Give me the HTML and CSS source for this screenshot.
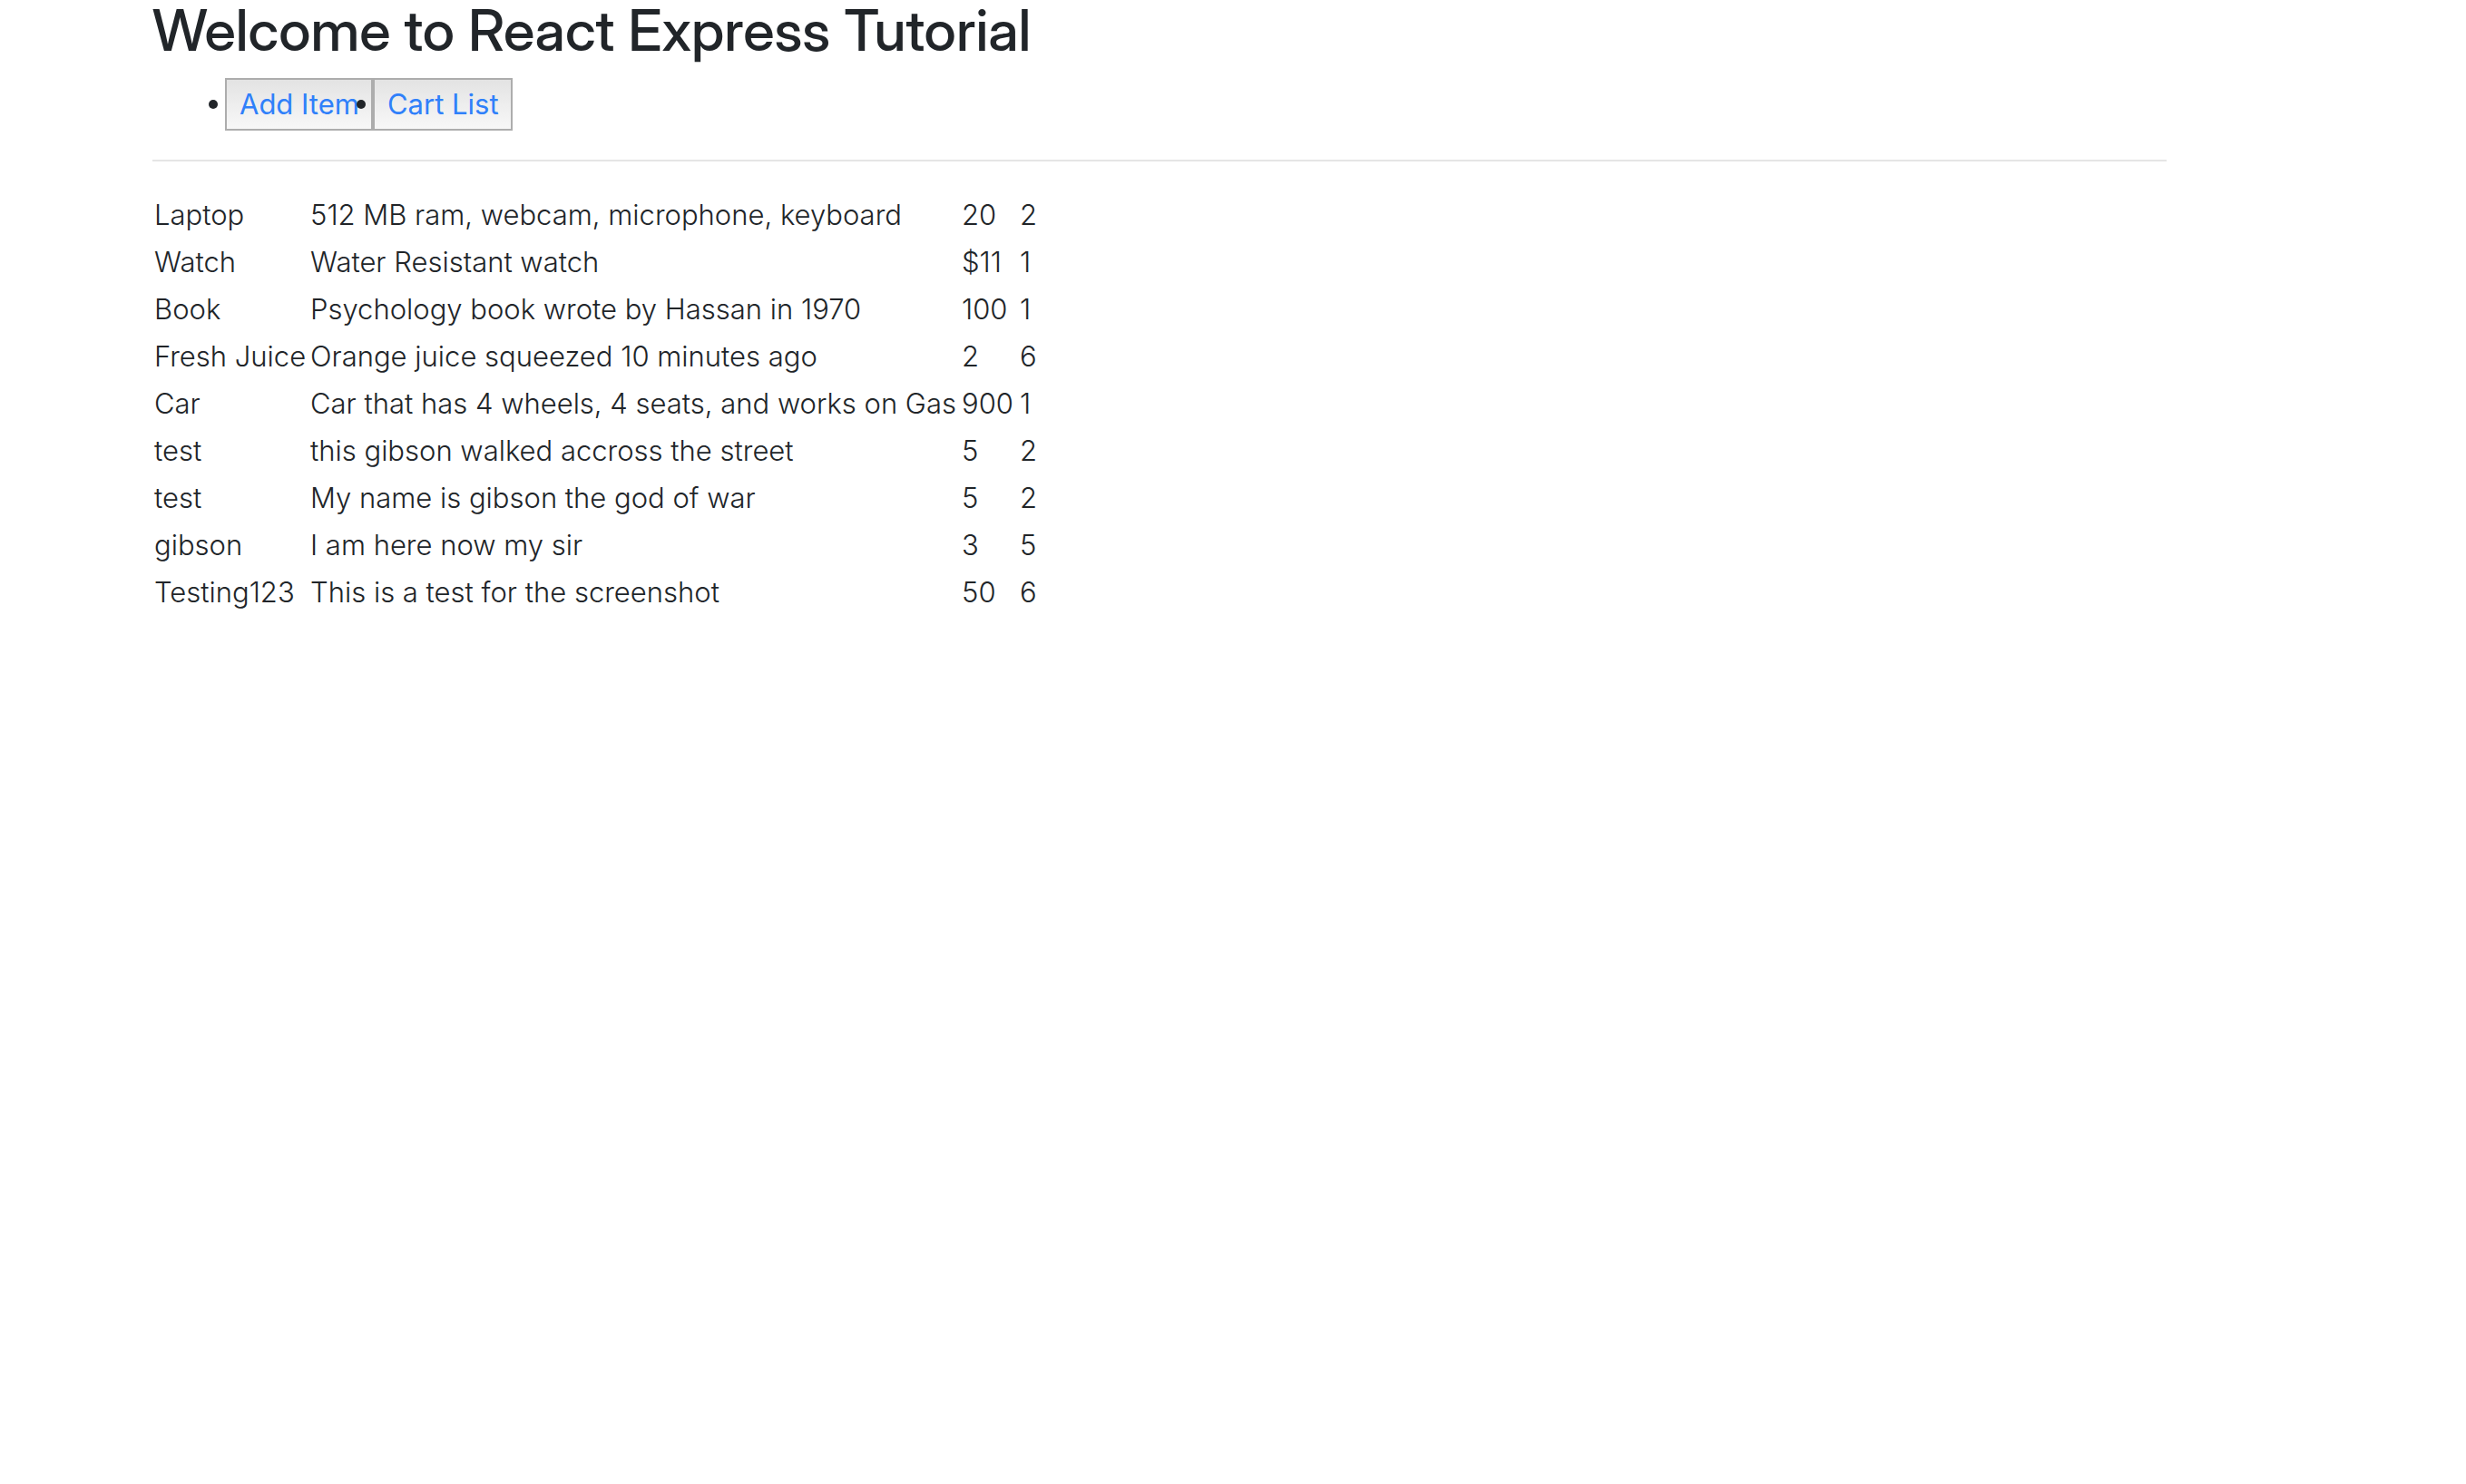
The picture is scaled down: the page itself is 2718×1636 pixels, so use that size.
FILE: index.html
```html
<!DOCTYPE html>
<html lang="en">
<head>
  <meta charset="utf-8">
  <title>React Express Tutorial</title>
  <link rel="stylesheet" href="styles.css">
</head>
<body>
  <main class="container">
    <h2 class="title">Welcome to React Express Tutorial</h2>
    <nav>
      <ul class="menu">
        <li class="menu-item"><a class="menu-link" href="#add">Add Item</a></li>
        <li class="menu-item"><a class="menu-link" href="#list">Cart List</a></li>
      </ul>
    </nav>
    <hr class="rule">
    <table class="items">
      <colgroup>
        <col class="col-name">
        <col class="col-description">
        <col class="col-price">
        <col class="col-quantity">
      </colgroup>
      <tbody>
        <tr><td>Laptop</td><td>512 MB ram, webcam, microphone, keyboard</td><td>20</td><td>2</td></tr>
        <tr><td>Watch</td><td>Water Resistant watch</td><td>$11</td><td>1</td></tr>
        <tr><td>Book</td><td>Psychology book wrote by Hassan in 1970</td><td>100</td><td>1</td></tr>
        <tr><td>Fresh Juice</td><td>Orange juice squeezed 10 minutes ago</td><td>2</td><td>6</td></tr>
        <tr><td>Car</td><td>Car that has 4 wheels, 4 seats, and works on Gas</td><td>900</td><td>1</td></tr>
        <tr><td>test</td><td>this gibson walked accross the street</td><td>5</td><td>2</td></tr>
        <tr><td>test</td><td>My name is gibson the god of war</td><td>5</td><td>2</td></tr>
        <tr><td>gibson</td><td>I am here now my sir</td><td>3</td><td>5</td></tr>
        <tr><td>Testing123</td><td>This is a test for the screenshot</td><td>50</td><td>6</td></tr>
      </tbody>
    </table>
  </main>
</body>
</html>
```

FILE: styles.css
```css
*,
*::before {
  box-sizing: border-box;
}

body {
  margin: 0;
  padding-right: 162px;
  background: #fff;
  color: #212529;
  font-family: Inter, "Liberation Sans", sans-serif;
  font-size: 31px;
  line-height: 48px;
}

.container {
  max-width: 2280px;
  margin: 0 auto;
  padding: 0 30px;
}

.title {
  margin: 0 0 20px;
  font-family: "Inter Display", Inter, "Liberation Sans", sans-serif;
  font-size: 63px;
  font-weight: 500;
  line-height: 66px;
}

.menu {
  display: flex;
  margin: 0 0 32px;
  padding: 0 0 0 80px;
  list-style: none;
}

.menu-item {
  position: relative;
  padding: 3px 13px 3px 14px;
  border: 2px solid #adadad;
  background: linear-gradient(#e3e3e3, #f8f8f8);
}

/* Bullet hangs outside the item, over its left neighbour */
.menu-item::before {
  content: "";
  position: absolute;
  top: 22px;
  left: -20px;
  width: 10px;
  height: 10px;
  border-radius: 50%;
  background: #212529;
}

.menu-link {
  color: #2f80fa;
  text-decoration: none;
}

.rule {
  margin: 0 0 32px;
  border: 0;
  border-top: 2px solid #e5e5e5;
}

.items {
  table-layout: fixed;
  width: 998px;
  border-collapse: collapse;
  font-weight: 300;
}

.items td {
  padding: 3px 2px 1px;
  white-space: nowrap;
}

.col-name {
  width: 172px;
}

.col-description {
  width: 718px;
}

.col-price {
  width: 64px;
}
```
